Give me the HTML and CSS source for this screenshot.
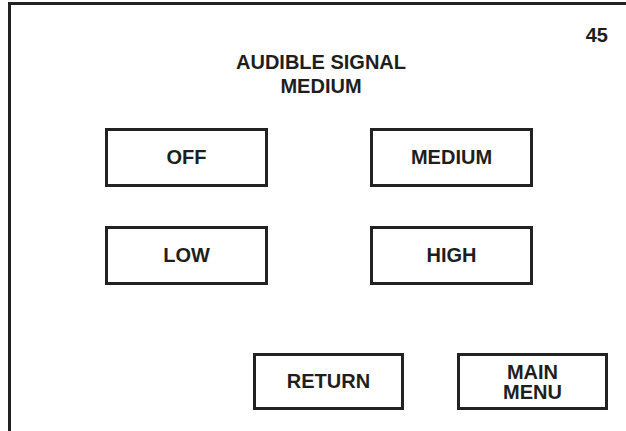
FILE: index.html
```html
<!DOCTYPE html>
<html lang="en">
<head>
    <meta charset="UTF-8">
    <meta name="viewport" content="width=device-width, initial-scale=1.0">
    <title>Audible Signal</title>
    <link rel="stylesheet" href="styles.css">
</head>
<body>

<div class="screen">
    <div class="page-no">45</div>
    <div class="title">
        AUDIBLE SIGNAL<br>
        MEDIUM
    </div>
    <div class="options">
        <button class="btn">OFF</button>
        <button class="btn">MEDIUM</button>
        <button class="btn">LOW</button>
        <button class="btn">HIGH</button>
    </div>
    <div class="nav">
        <button class="btn">RETURN</button>
        <button class="btn two-line">MAIN<br>MENU</button>
    </div>
</div>

</body>
</html>
```

FILE: styles.css
```css
body {
    margin: 0;
    font-family: "Liberation Sans", Arial, sans-serif;
    background-color: white;
    color: #1e1e1e;
}
.screen {
    margin: 2px 0 0 8px;
    height: calc(100vh - 2px);
    box-sizing: border-box;
    border-top: 3px solid #222;
    border-left: 3px solid #222;
    padding-top: 20px;
}
.page-no {
    text-align: right;
    padding-right: 18px;
    font-size: 20px;
    font-weight: bold;
    line-height: 20px;
}
.title {
    margin-top: 5px;
    padding-left: 5px;
    text-align: center;
    font-size: 20px;
    font-weight: bold;
    line-height: 24px;
}
.options {
    display: grid;
    grid-template-columns: 163px 163px;
    grid-auto-rows: 59px;
    column-gap: 102px;
    row-gap: 39px;
    margin: 30px 0 0 94px;
}
.nav {
    display: grid;
    grid-template-columns: 151px 151px;
    grid-auto-rows: 57px;
    column-gap: 53px;
    margin: 68px 0 0 242px;
}
.btn {
    background-color: white;
    border: 3px solid #222;
    border-radius: 0;
    padding: 0;
    font-family: inherit;
    font-size: 20px;
    font-weight: bold;
    color: #1e1e1e;
}
.two-line {
    line-height: 20px;
}
```
